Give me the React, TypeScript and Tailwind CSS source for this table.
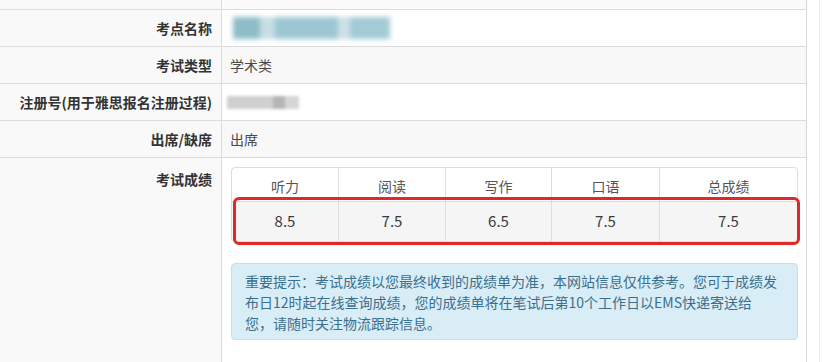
import React from "react";

const scores = [
  { name: "听力", value: "8.5" },
  { name: "阅读", value: "7.5" },
  { name: "写作", value: "6.5" },
  { name: "口语", value: "7.5" },
  { name: "总成绩", value: "7.5" },
];

const font = "font-['Noto_Sans_CJK_SC','Microsoft_YaHei',sans-serif]";

function Row({
  label,
  children,
  striped,
}: {
  label: string;
  children?: React.ReactNode;
  striped?: boolean;
}) {
  return (
    <div className={`flex h-[37px] border-b border-[#dcdcdc] ${striped ? "bg-[#f8f8f8]" : "bg-white"}`}>
      <div className="flex w-[222px] shrink-0 items-center justify-end border-r border-[#dcdcdc] bg-[#f9f9f9] pr-[9px] text-[14px] font-bold text-[#333]">
        {label}
      </div>
      <div className="flex flex-1 items-center pl-[8px] text-[14px] text-[#4a4a4a]">{children}</div>
    </div>
  );
}

export default function App() {
  return (
    <div className={`relative h-[362px] w-[824px] overflow-hidden bg-white ${font}`}>
      <div className="absolute inset-y-0 left-[819px] border-l border-[#efefef]" />
      <div className="w-[807px] border-r border-[#d6d6d6]">
        {/* row cut off at the top */}
        <div className="flex h-[10px] border-b border-[#dcdcdc] bg-[#fbfbfb]">
          <div className="w-[222px] border-r border-[#dcdcdc] bg-[#f9f9f9]" />
        </div>

        <Row label="考点名称">
          {/* redacted venue name */}
          <div className="ml-[3px] flex h-[22px] items-stretch blur-[2.5px]">
            <div className="w-[27px] bg-[#8fbcc8]" />
            <div className="w-[15px] bg-[#c6dee4]" />
            <div className="w-[63px] bg-[#9cc7d2]" />
            <div className="w-[12px] bg-[#cde2e7]" />
            <div className="w-[40px] bg-[#a3cbd5]" />
          </div>
        </Row>
        <Row label="考试类型" striped>
          学术类
        </Row>
        <Row label="注册号(用于雅思报名注册过程)">
          {/* redacted registration number */}
          <div className="-ml-[3px] flex h-[13px] items-stretch blur-[1.5px]">
            <div className="w-[46px] bg-[#d0d0d0]" />
            <div className="w-[12px] bg-[#b5b5b5]" />
            <div className="w-[14px] bg-[#d6d6d6]" />
          </div>
        </Row>
        <Row label="出席/缺席" striped>
          出席
        </Row>

        <div className="flex h-[220px]">
          <div className="w-[222px] shrink-0 border-r border-[#dcdcdc] bg-[#f9f9f9] pr-[9px] pt-[11px] text-right text-[14px] font-bold leading-[20px] text-[#333]">
            考试成绩
          </div>
          <div className="flex-1 pl-[9px] pt-[9px]">
            <div className="relative w-[567px]">
              <div className="grid grid-cols-[106px_107px_106px_108px_1fr] overflow-hidden rounded-[4px] border border-[#dddddd]">
                {scores.map((s, i) => (
                  <div
                    key={s.name}
                    className={`h-[33px] pt-[8px] text-center text-[14px] leading-[20px] text-[#555] ${i > 0 ? "border-l border-[#dddddd]" : ""}`}
                  >
                    {s.name}
                  </div>
                ))}
                {scores.map((s, i) => (
                  <div
                    key={s.name + "-v"}
                    className={`flex h-[40px] items-center justify-center border-t border-[#dddddd] bg-[#f5f5f5] text-[15px] text-[#3a3a3a] ${i > 0 ? "border-l" : ""}`}
                  >
                    {s.value}
                  </div>
                ))}
              </div>
              {/* highlight around the score row */}
              <div className="absolute left-[2px] top-[30px] h-[48px] w-[567px] rounded-[6px] border-[3px] border-[#e0282a]" />
            </div>

            <div className="mt-[21px] w-[567px] rounded-[4px] border border-[#bfe2ee] bg-[#d9edf7] pb-[5px] pl-[13px] pr-[8px] pt-[7px] text-[14px] leading-[21px] text-[#3a6f8d]">
              重要提示：考试成绩以您最终收到的成绩单为准，本网站信息仅供参考。您可于成绩发
              <br />
              布日12时起在线查询成绩，您的成绩单将在笔试后第10个工作日以EMS快递寄送给
              <br />
              您，请随时关注物流跟踪信息。
            </div>
          </div>
        </div>
      </div>
    </div>
  );
}
